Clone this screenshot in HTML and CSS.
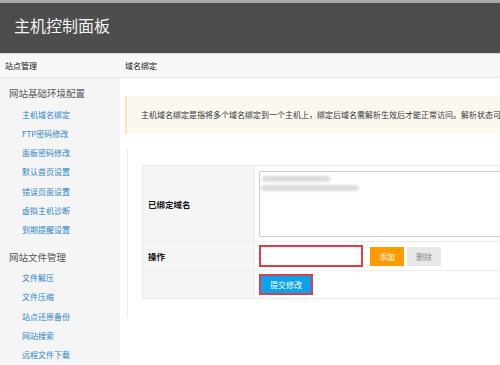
FILE: index.html
```html
<!DOCTYPE html>
<html lang="zh-CN">
<head>
  <meta charset="UTF-8" />
  <title>主机控制面板</title>
  <link rel="stylesheet" href="styles.css">
</head>
<body>
  <header class="topbar">
    <span class="title">主机控制面板</span>
  </header>
  <div class="tabs">
    <div class="tab-side">站点管理</div>
    <div class="tab-main">域名绑定</div>
  </div>
  <div class="main">
    <div class="sidebar">
      <div class="group">网站基础环境配置</div>
      <a class="link">主机域名绑定</a>
      <a class="link">FTP密码修改</a>
      <a class="link">面板密码修改</a>
      <a class="link">默认首页设置</a>
      <a class="link">错误页面设置</a>
      <a class="link">虚拟主机诊断</a>
      <a class="link">到期提醒设置</a>
      <div class="group">网站文件管理</div>
      <a class="link">文件解压</a>
      <a class="link">文件压缩</a>
      <a class="link">站点还原备份</a>
      <a class="link">网站搜索</a>
      <a class="link">远程文件下载</a>
    </div>
    <div class="content">
      <div class="notice">主机域名绑定是指将多个域名绑定到一个主机上，绑定后域名需解析生效后才能正常访问。解析状态可</div>
      <div class="panel">
        <table class="form">
          <tr class="row-big">
            <th>已绑定域名</th>
            <td>
              <div class="domains">
                <span class="blur b1"></span>
                <span class="blur b2"></span>
              </div>
            </td>
          </tr>
          <tr class="row-op">
            <th>操作</th>
            <td>
              <div class="ops">
                <input type="text" class="domain-input" />
                <button class="btn btn-add">添加</button>
                <button class="btn btn-del">删除</button>
              </div>
            </td>
          </tr>
          <tr class="row-submit">
            <th></th>
            <td><button class="btn btn-submit">提交修改</button></td>
          </tr>
        </table>
      </div>
    </div>
  </div>
</body>
</html>
```

FILE: styles.css
```css
body {
  margin: 0;
  width: 500px;
  height: 365px;
  overflow: hidden;
  font-family: "Noto Sans CJK SC", "Liberation Sans", sans-serif;
  color: #333;
  background: #fff;
}
.topbar {
  height: 50px;
  background: #4d4d4d;
  border-top: 3px solid #a8a8a8;
  border-bottom: 1px solid #d8d8d8;
  display: flex;
  align-items: center;
  padding-left: 14px;
}
.title {
  color: #f4f4f4;
  font-size: 16px;
  margin-top: -6px;
}
.tabs {
  height: 23px;
  display: flex;
  align-items: center;
  background: #f8f8f8;
  border-bottom: 1px solid #e6e9ee;
  font-size: 8px;
  color: #111;
}
.tab-side {
  width: 115px;
  padding-left: 5px;
}
.tab-main {
  padding-left: 5px;
}
.main {
  display: flex;
  height: 287px;
}
.sidebar {
  width: 120px;
  background: #f5f5f5;
  padding-top: 5px;
  display: flex;
  flex-direction: column;
}
.group {
  font-size: 9.5px;
  line-height: 20px;
  color: #555;
  padding-left: 9px;
  margin-bottom: 1.5px;
}
.group ~ .group {
  margin-top: 7px;
}
.link {
  font-size: 8px;
  line-height: 19.3px;
  color: #2a86c8;
  padding-left: 22px;
}
.content {
  flex: 1;
  padding: 18px 0 0 5px;
  overflow: hidden;
}
.notice {
  height: 38px;
  line-height: 38px;
  background: #fcf8ef;
  border-left: 2px solid #f6e3c2;
  padding-left: 14px;
  font-size: 8px;
  white-space: nowrap;
  overflow: hidden;
}
.panel {
  margin: 14px 0 0 2px;
  border-left: 1px solid #ececec;
  padding: 17px 0 19px 14px;
}
.form {
  border-collapse: collapse;
  width: 400px;
}
.form th, .form td {
  border: 1px solid #ebebeb;
  padding: 0;
}
.form th {
  width: 106px;
  background: #f5f5f5;
  font-size: 8.5px;
  text-align: left;
  padding-left: 5px;
  color: #111;
}
.form td {
  padding-left: 4px;
}
.row-big { height: 76px; }
.row-op { height: 29px; }
.row-submit { height: 28px; }
.domains {
  height: 64px;
  border: 1px solid #c8c8c8;
  border-radius: 2px;
  position: relative;
  background: #fff;
}
.blur {
  position: absolute;
  display: block;
  height: 6px;
  background: #dcdcdc;
  border-radius: 3px;
  filter: blur(1.3px);
}
.b1 { left: 2px; top: 4px; width: 68px; }
.b2 { left: 1px; top: 13px; width: 98px; }
.ops {
  display: flex;
  align-items: center;
  gap: 3px;
}
.domain-input {
  width: 100px;
  height: 18px;
  border: 2px solid #e23b45;
  padding: 0;
  margin-right: 4px;
  box-sizing: content-box;
}
.btn {
  font-family: inherit;
  font-size: 8px;
  border: none;
  padding: 0;
  cursor: pointer;
}
.btn-add {
  width: 34px;
  height: 19px;
  background: #ff9a00;
  color: #fff;
}
.btn-del {
  width: 34px;
  height: 19px;
  background: #e8e8e8;
  color: #888;
}
.btn-submit {
  width: 54px;
  height: 21px;
  background: #0da2ee;
  color: #fff;
  border: 2px solid #d8404d;
  display: block;
}
```
